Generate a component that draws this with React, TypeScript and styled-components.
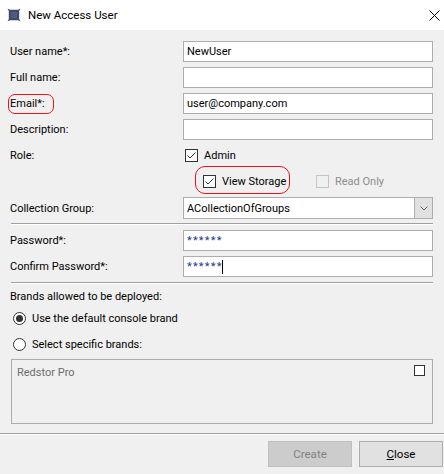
import React from 'react';
import styled, { createGlobalStyle } from 'styled-components';

const GlobalStyle = createGlobalStyle`
  html, body {
    margin: 0;
    padding: 0;
    background: #f0f0f0;
  }
  body {
    font-family: "Segoe UI", Roboto, "Liberation Sans", sans-serif;
    font-size: 11px;
    color: #000;
  }
`

const Window = styled.div`
  width: 444px;
  height: 474px;
  display: flex;
  flex-direction: column;
  background: #f0f0f0;
  overflow: hidden;
`

const TitleBar = styled.div`
  height: 30px;
  flex: none;
  display: flex;
  align-items: center;
  background: #fff;
  padding: 0 4px 0 7px;
`

const TitleText = styled.span`
  flex: 1;
  margin-left: 7px;
  font-size: 11.5px;
  color: #000;
`

const CloseGlyph = styled.svg`
  width: 11px;
  height: 11px;
`

const Body = styled.div`
  flex: 1;
  display: flex;
  flex-direction: column;
  padding: 11px 11px 0 10px;
`

const FormRow = styled.div<{ $height?: number; $gap?: number }>`
  display: grid;
  grid-template-columns: 173px 1fr;
  align-items: center;
  height: ${p => p.$height ?? 21}px;
  margin-bottom: ${p => p.$gap ?? 5}px;
`

const Label = styled.span<{ $marked?: boolean }>`
  position: relative;
  justify-self: start;
  ${p => p.$marked && `
    &::after {
      content: '';
      position: absolute;
      left: -2px;
      top: -3px;
      width: 46px;
      height: 20px;
      box-sizing: border-box;
      border: 1px solid #e3141d;
      border-radius: 7px;
    }
  `}
`

const TextBox = styled.div<{ $secret?: boolean }>`
  box-sizing: border-box;
  height: 21px;
  display: flex;
  align-items: center;
  padding: 0 3px;
  border: 1px solid #adadad;
  background: #fff;
  color: ${p => (p.$secret ? '#23398a' : '#000')};
  letter-spacing: ${p => (p.$secret ? '1.2px' : 'normal')};
  white-space: pre;
`

const Caret = styled.span`
  display: inline-block;
  width: 1px;
  height: 14px;
  margin-left: -1px;
  background: #000;
`

const CheckList = styled.div<{ $indent?: number }>`
  display: flex;
  align-items: center;
  padding-left: ${p => p.$indent ?? 2}px;
`

const CheckItem = styled.span<{ $width?: number; $marked?: boolean; $disabled?: boolean }>`
  position: relative;
  display: inline-flex;
  align-items: center;
  gap: 6px;
  width: ${p => (p.$width ? `${p.$width}px` : 'auto')};
  color: ${p => (p.$disabled ? '#8d8d8d' : '#000')};
  ${p => p.$marked && `
    &::after {
      content: '';
      position: absolute;
      left: -8px;
      top: -9px;
      width: 95px;
      height: 28px;
      box-sizing: border-box;
      border: 1px solid #e3141d;
      border-radius: 10px;
    }
  `}
`

const Box = styled.span<{ $disabled?: boolean; $size?: number }>`
  box-sizing: border-box;
  flex: none;
  display: inline-flex;
  width: ${p => p.$size ?? 13}px;
  height: ${p => p.$size ?? 13}px;
  border: 1px solid ${p => (p.$disabled ? '#c4c4c4' : '#333')};
  background: ${p => (p.$disabled ? '#f0f0f0' : '#fff')};
`

const Select = styled.div`
  box-sizing: border-box;
  height: 22px;
  display: flex;
  align-items: stretch;
  border: 1px solid #adadad;
  background: #fff;
`

const SelectValue = styled.span`
  flex: 1;
  display: flex;
  align-items: center;
  padding-left: 3px;
`

const SelectButton = styled.span`
  width: 17px;
  display: flex;
  align-items: center;
  justify-content: center;
  background: #e1e1e1;
  border-left: 1px solid #adadad;
`

const Divider = styled.div<{ $top: number; $bottom: number }>`
  height: 0;
  margin: ${p => p.$top}px 0 ${p => p.$bottom}px 1px;
  border-top: 1px solid #a0a0a0;
  border-bottom: 1px solid #fff;
`

const Heading = styled.div`
  height: 16px;
  line-height: 16px;
  margin-top: 5px;
`

const RadioRow = styled.label<{ $top: number }>`
  display: flex;
  align-items: center;
  gap: 6px;
  height: 20px;
  margin-top: ${p => p.$top}px;
  padding-left: 3px;
`

const Radio = styled.span<{ $checked?: boolean }>`
  box-sizing: border-box;
  width: 13px;
  height: 13px;
  border: 1px solid #333;
  border-radius: 50%;
  background: #fff;
  display: flex;
  align-items: center;
  justify-content: center;
  &::after {
    content: '';
    display: ${p => (p.$checked ? 'block' : 'none')};
    width: 7px;
    height: 7px;
    border-radius: 50%;
    background: #333;
  }
`

const ListBox = styled.div`
  box-sizing: border-box;
  height: 65px;
  margin: 5px 0 0 1px;
  padding: 5px 7px 0 5px;
  display: flex;
  justify-content: space-between;
  align-items: flex-start;
  border: 1px solid #adadad;
  background: #f0f0f0;
`

const ListText = styled.span`
  color: #6d6d6d;
  line-height: 15px;
`

const Footer = styled.div`
  flex: none;
  border-top: 1px solid #a0a0a0;
  box-shadow: inset 0 1px 0 #fff;
  padding: 7px 1px 7px 0;
  display: flex;
  justify-content: flex-end;
  gap: 7px;
`

const Button = styled.button<{ $disabled?: boolean }>`
  box-sizing: border-box;
  width: 84px;
  height: 26px;
  margin: 0;
  padding: 0;
  font-family: inherit;
  font-size: 11.5px;
  background: ${p => (p.$disabled ? '#cccccc' : '#e1e1e1')};
  border: 1px solid ${p => (p.$disabled ? '#bfbfbf' : '#adadad')};
  color: ${p => (p.$disabled ? '#838383' : '#000')};
`

const AppIcon = () => (
  <svg width="14" height="14" viewBox="0 0 14 14">
    <path d="M0.5 0.5 L3 1.8 L11 1.8 L13.5 0.5 L12.2 3 L12.2 11 L13.5 13.5 L11 12.2 L3 12.2 L0.5 13.5 L1.8 11 L1.8 3 Z" fill="#3f4c69" />
    <rect x="4" y="4" width="6" height="6" fill="#4d5c80" />
  </svg>
)

const Check = ({ checked, disabled, size }: { checked?: boolean; disabled?: boolean; size?: number }) => (
  <Box $disabled={disabled} $size={size}>
    {checked && (
      <svg width="11" height="11" viewBox="0 0 11 11">
        <polyline points="1.5,5.5 4,8 9.5,2.5" fill="none" stroke="#333" strokeWidth="1" />
      </svg>
    )}
  </Box>
)

interface Field {
  label: string
  value?: string
  marked?: boolean
  secret?: boolean
  focused?: boolean
}

const topFields: Field[] = [
  { label: 'User name*:', value: 'NewUser' },
  { label: 'Full name:' },
  { label: 'Email*:', value: 'user@company.com', marked: true },
  { label: 'Description:' },
]

const passFields: Field[] = [
  { label: 'Password*:', value: '******', secret: true },
  { label: 'Confirm Password*:', value: '******', secret: true, focused: true },
]

const FieldRow = ({ field }: { field: Field }) => (
  <FormRow>
    <Label $marked={field.marked}>{field.label}</Label>
    <TextBox $secret={field.secret}>
      {field.value ?? ''}
      {field.focused && <Caret />}
    </TextBox>
  </FormRow>
)

export default function App() {
  return (
    <>
      <GlobalStyle />
      <Window>
        <TitleBar>
          <AppIcon />
          <TitleText>New Access User</TitleText>
          <CloseGlyph viewBox="0 0 11 11">
            <path d="M0.5 0.5 L10.5 10.5 M10.5 0.5 L0.5 10.5" stroke="#000" strokeWidth="1" />
          </CloseGlyph>
        </TitleBar>
        <Body>
          {topFields.map(f => <FieldRow key={f.label} field={f} />)}
          <FormRow $gap={5}>
            <span>Role:</span>
            <CheckList>
              <CheckItem><Check checked />Admin</CheckItem>
            </CheckList>
          </FormRow>
          <FormRow $gap={5}>
            <span />
            <CheckList $indent={20}>
              <CheckItem $width={113} $marked><Check checked />View Storage</CheckItem>
              <CheckItem $disabled><Check disabled />Read Only</CheckItem>
            </CheckList>
          </FormRow>
          <FormRow $height={22} $gap={0}>
            <span>Collection Group:</span>
            <Select>
              <SelectValue>ACollectionOfGroups</SelectValue>
              <SelectButton>
                <svg width="8" height="5" viewBox="0 0 8 5">
                  <polyline points="0.5,0.5 4,4 7.5,0.5" fill="none" stroke="#606060" strokeWidth="1" />
                </svg>
              </SelectButton>
            </Select>
          </FormRow>
          <Divider $top={4} $bottom={5} />
          {passFields.map(f => <FieldRow key={f.label} field={f} />)}
          <Divider $top={0} $bottom={0} />
          <Heading>Brands allowed to be deployed:</Heading>
          <RadioRow $top={3}><Radio $checked />Use the default console brand</RadioRow>
          <RadioRow $top={6}><Radio />Select specific brands:</RadioRow>
          <ListBox>
            <ListText>Redstor Pro</ListText>
            <Check size={11} />
          </ListBox>
        </Body>
        <Footer>
          <Button $disabled>Create</Button>
          <Button><u>C</u>lose</Button>
        </Footer>
      </Window>
    </>
  )
}
